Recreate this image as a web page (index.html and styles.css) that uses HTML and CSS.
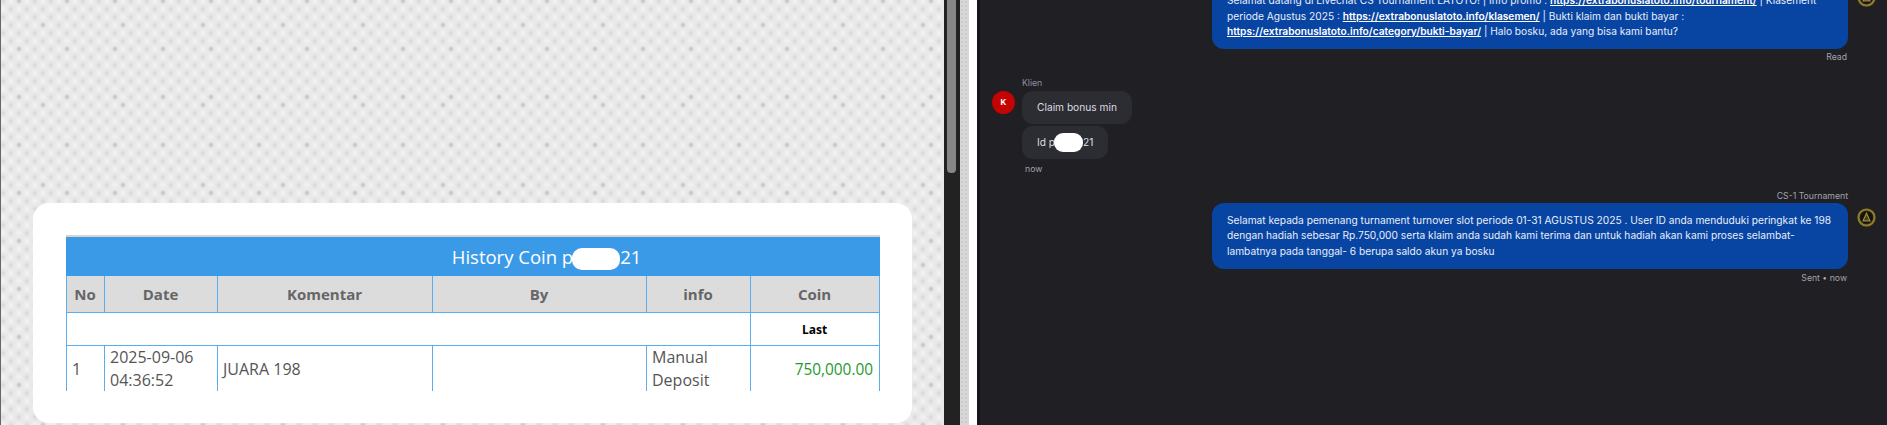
FILE: index.html
```html
<!DOCTYPE html>
<html lang="en">
<head>
    <meta charset="UTF-8">
    <title>History Coin</title>
    <link rel="stylesheet" href="styles.css">
</head>
<body>
    <div class="left-pane">
        <div class="card">
            <div class="table-wrap">
                <table class="coin-table">
                    <colgroup>
                        <col class="col-no"><col class="col-date"><col class="col-komentar">
                        <col class="col-by"><col class="col-info"><col class="col-coin">
                    </colgroup>
                    <tr>
                        <td class="title" colspan="6">History Coin p<span class="blur-pill title-pill"></span>21</td>
                    </tr>
                    <tr class="head">
                        <th>No</th><th>Date</th><th>Komentar</th><th>By</th><th>info</th><th>Coin</th>
                    </tr>
                    <tr class="last-row">
                        <td colspan="5"></td>
                        <td class="last">Last</td>
                    </tr>
                    <tr class="entry">
                        <td>1</td>
                        <td>2025-09-06<br>04:36:52</td>
                        <td>JUARA 198</td>
                        <td></td>
                        <td>Manual<br>Deposit</td>
                        <td class="amount">750,000.00</td>
                    </tr>
                </table>
            </div>
        </div>
    </div>

    <div class="scroll-track"><div class="scroll-thumb"></div></div>
    <div class="divider"></div>

    <div class="chat">
        <div class="msg-out first">
            <div class="msg-main">
                <div class="bubble-out">
                    Selamat datang di Livechat CS Tournament LATOTO! | Info promo : <a href="#">https://extrabonuslatoto.info/tournament/</a> | Klasement periode Agustus 2025 : <a href="#">https://extrabonuslatoto.info/klasemen/</a> | Bukti klaim dan bukti bayar : <a href="#">https://extrabonuslatoto.info/category/bukti-bayar/</a> | Halo bosku, ada yang bisa kami bantu?
                </div>
                <div class="status">Read</div>
            </div>
            <div class="agent-slot">
                <svg class="agent-avatar" viewBox="0 0 22 22">
                    <circle cx="11" cy="11" r="10.5" fill="#2a2716"/>
                    <circle cx="11" cy="11" r="8.4" fill="none" stroke="#8f7d34" stroke-width="2.2"/>
                    <circle cx="11" cy="11" r="6.4" fill="#14130e"/>
                    <path d="M11 6.5 L14.6 14.5 H7.4 Z" fill="#4a4020" stroke="#a08a40" stroke-width="1.3"/>
                </svg>
            </div>
        </div>

        <div class="msg-in">
            <div class="client-name">Klien</div>
            <div class="client-row">
                <div class="client-avatar">K</div>
                <div class="client-bubbles">
                    <div class="bubble-in">Claim bonus min</div>
                    <div class="bubble-in">Id p<span class="blur-pill chat-pill"></span>21</div>
                </div>
            </div>
            <div class="client-time">now</div>
        </div>

        <div class="msg-out second">
            <div class="msg-main">
                <div class="agent-name">CS-1 Tournament</div>
                <div class="bubble-out">
                    Selamat kepada pemenang turnament turnover slot periode 01-31 AGUSTUS 2025 . User ID anda menduduki peringkat ke 198 dengan hadiah sebesar Rp.750,000 serta klaim anda sudah kami terima dan untuk hadiah akan kami proses selambat-lambatnya pada tanggal- 6 berupa saldo akun ya bosku
                </div>
                <div class="status">Sent &bull; now</div>
            </div>
            <div class="agent-slot">
                <svg class="agent-avatar" viewBox="0 0 22 22">
                    <circle cx="11" cy="11" r="10.5" fill="#2a2716"/>
                    <circle cx="11" cy="11" r="8.4" fill="none" stroke="#8f7d34" stroke-width="2.2"/>
                    <circle cx="11" cy="11" r="6.4" fill="#14130e"/>
                    <path d="M11 6.5 L14.6 14.5 H7.4 Z" fill="#4a4020" stroke="#a08a40" stroke-width="1.3"/>
                </svg>
            </div>
        </div>
    </div>
</body>
</html>
```

FILE: styles.css
```css
html, body {
    margin: 0;
    padding: 0;
    height: 425px;
    overflow: hidden;
}

body {
    display: flex;
    background-color: #1f1f24;
    font-family: 'Inter', 'Liberation Sans', sans-serif;
}

.left-pane {
    box-sizing: border-box;
    width: 944px;
    height: 425px;
    padding: 203px 32px 2px 32px;
    border-left: 1px solid #666;
    background-color: #e9e9e9;
    background-image:
        radial-gradient(circle, #c0c0c0 0, rgba(192, 192, 192, 0) 3px),
        radial-gradient(circle, #c4c4c4 0, rgba(196, 196, 196, 0) 3px),
        radial-gradient(circle, #d6d6d6 0, rgba(214, 214, 214, 0) 3.5px),
        radial-gradient(circle, #d6d6d6 0, rgba(214, 214, 214, 0) 3.5px),
        radial-gradient(circle, #f4f4f4 0, rgba(244, 244, 244, 0) 4px),
        radial-gradient(circle, #f4f4f4 0, rgba(244, 244, 244, 0) 4px);
    background-size: 48px 48px, 80px 80px, 16px 16px, 16px 16px, 16px 16px, 16px 16px;
    background-position: -6px -23px, 2px -15px, -6px -7px, 2px 1px, 2px -7px, -6px 1px;
}

.card {
    box-sizing: border-box;
    width: 879px;
    height: 220px;
    padding: 32px 32px 32px 33px;
    background-color: white;
    border-radius: 16px;
}

.table-wrap {
    height: 154px;
    overflow: hidden;
    border-top: 2px solid #d8d4cc;
}

.coin-table {
    width: 813px;
    table-layout: fixed;
    border-collapse: collapse;
    font-family: 'Open Sans', 'Noto Sans', sans-serif;
    font-size: 16px;
    color: #555;
}

.col-no { width: 38px; }
.col-date { width: 113px; }
.col-komentar { width: 215px; }
.col-by { width: 214px; }
.col-info { width: 104px; }
.col-coin { width: 129px; }

.coin-table th,
.coin-table td {
    border: 1px solid #5aaeee;
    padding: 0 6px 0 5px;
}

.coin-table .title {
    height: 37px;
    padding: 0 0 0 147px;
    background-color: #3a9ae8;
    border-color: #3a9ae8;
    color: white;
    font-size: 18.5px;
    text-align: center;
}

.head th {
    height: 36px;
    background-color: #dcdcdc;
    color: #666;
    font-size: 15px;
    font-weight: 700;
}

.last-row td {
    height: 32px;
}

.coin-table .last {
    color: black;
    font-size: 12px;
    font-weight: 700;
    text-align: center;
}

.coin-table .entry td {
    height: 46px;
    padding-bottom: 6px;
    line-height: 23px;
}

.coin-table .entry .amount {
    color: #1f9a2e;
    font-size: 15.4px;
    text-align: right;
}

.blur-pill {
    display: inline-block;
    background-color: white;
    border-radius: 10px;
    vertical-align: middle;
}

.title-pill {
    width: 48px;
    height: 22px;
    margin: -4px 0 -4px -1px;
}

.chat-pill {
    width: 29px;
    height: 19px;
    margin: -4px 0 -4px -1px;
    border-radius: 9px;
}

.scroll-track {
    box-sizing: border-box;
    width: 16px;
    height: 425px;
    padding: 0 4px 0 3px;
    background-color: #222;
}

.scroll-thumb {
    height: 173px;
    background-color: #868686;
    border-radius: 0 0 4px 4px;
}

.divider {
    box-sizing: border-box;
    width: 17px;
    height: 425px;
    background-color: #d8d8d8;
    background-image: radial-gradient(circle, #aaa 0, rgba(170, 170, 170, 0) 1px);
    background-size: 4px 4px;
    border-right: 8px solid white;
}

.chat {
    flex: 1;
    height: 425px;
    overflow: hidden;
    font-size: 10.2px;
    color: #f0f0f0;
    border-left: 3px solid #151519;
}

.msg-out {
    display: flex;
    justify-content: flex-end;
}

.msg-out.first {
    margin-top: -16.5px;
}

.msg-out.second {
    margin-top: 16px;
}

.msg-main {
    width: 636px;
}

.agent-slot {
    width: 21px;
    margin: 0 10px 0 8px;
}

.first .agent-slot {
    padding-top: 3px;
}

.second .agent-slot {
    padding-top: 16px;
}

.agent-avatar {
    display: block;
    width: 21px;
    height: 21px;
    filter: blur(0.5px);
}

.bubble-out {
    padding: 9.5px 15px;
    background-color: #0845a3;
    border-radius: 12px;
    line-height: 15.5px;
    color: #e8eefa;
}

.bubble-out a {
    color: white;
    font-weight: 600;
}

.status,
.agent-name,
.client-time {
    font-size: 8.7px;
    line-height: 11px;
    color: #a4a4ab;
}

.status,
.agent-name {
    text-align: right;
}

.status {
    margin-top: 2.5px;
    padding-right: 1px;
}

.second .status {
    margin-top: 4.5px;
}

.agent-name {
    margin-bottom: 1.5px;
}

.msg-in {
    padding-left: 12px;
    margin-top: 15px;
}

.client-name {
    margin-left: 30px;
    margin-bottom: 2.5px;
    font-size: 8.7px;
    line-height: 11px;
    color: #8f8fa0;
}

.client-row {
    display: flex;
    gap: 7px;
}

.client-avatar {
    width: 23px;
    height: 23px;
    border-radius: 50%;
    background-color: #c40303;
    color: white;
    font-size: 8px;
    font-weight: 700;
    line-height: 23px;
    text-align: center;
}

.client-bubbles {
    display: flex;
    flex-direction: column;
    align-items: flex-start;
    gap: 2px;
}

.bubble-in {
    padding: 8.75px 15px;
    background-color: #2c2c33;
    border-radius: 11px;
    line-height: 15.5px;
    color: #dcdce0;
}

.client-time {
    margin: 4.5px 0 0 33px;
}
```
